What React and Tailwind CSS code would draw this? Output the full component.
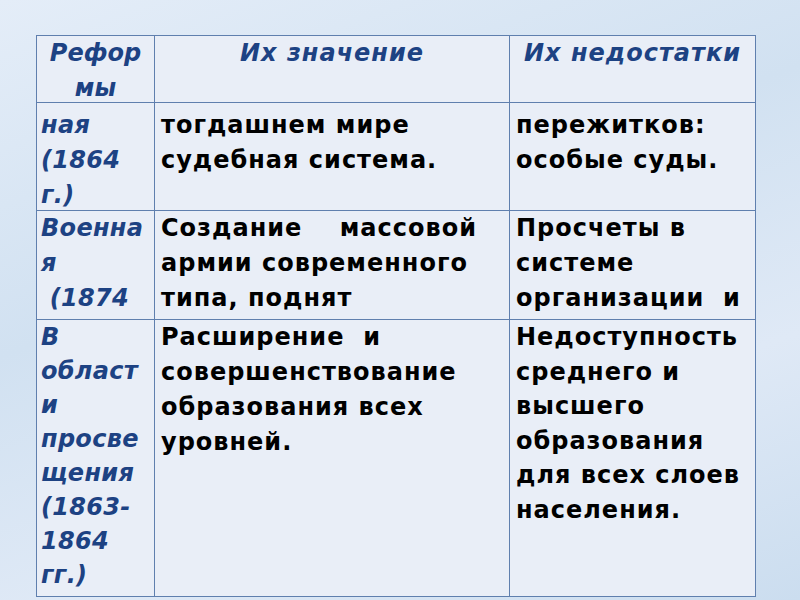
import React from "react";

const head = "text-[#1d4283] italic font-bold text-center align-top leading-[35px]";
const cell = "border border-[#5f7fae] align-top overflow-hidden";
const body = "text-black font-bold px-[6px]";
const side = "text-[#1d4283] italic font-bold px-[4px] tracking-[0.3px]";

export default function App() {
  return (
    <div
      className="w-[800px] h-[600px] overflow-hidden bg-[linear-gradient(160deg,#e4edf8_0%,#d1e1f1_40%,#dfe9f6_70%,#cbddef_100%)] pt-[35px] pl-[36px]"
      style={{ fontFamily: '"DejaVu Sans", Verdana, sans-serif' }}
    >
      <table className="table-fixed border-collapse bg-[#e9eef7] text-[24px] tracking-[1px]">
        <colgroup>
          <col className="w-[118px]" />
          <col className="w-[355px]" />
          <col className="w-[246px]" />
        </colgroup>
        <tbody>
          <tr>
            <td className={`${cell} ${head}`}>
              <div className="h-[66px] overflow-hidden tracking-[0px]">Рефор<br />мы</div>
            </td>
            <td className={`${cell} ${head}`}>
              <div className="h-[66px] overflow-hidden">Их значение</div>
            </td>
            <td className={`${cell} ${head}`}>
              <div className="h-[66px] overflow-hidden">Их недостатки</div>
            </td>
          </tr>
          <tr>
            <td className={cell}>
              <div className={`h-[107px] leading-[35px] pt-[5px] ${side}`}>ная<br />(1864<br />г.)</div>
            </td>
            <td className={cell}>
              <div className={`h-[107px] leading-[35px] pt-[5px] ${body}`}>тогдашнем мире<br />судебная система.</div>
            </td>
            <td className={cell}>
              <div className={`h-[107px] leading-[35px] pt-[5px] ${body}`}>пережитков:<br />особые суды.</div>
            </td>
          </tr>
          <tr>
            <td className={cell}>
              <div className={`h-[108px] leading-[35px] ${side} overflow-hidden`}>Военна<br />я<br />&nbsp;(1874</div>
            </td>
            <td className={cell}>
              <div className={`h-[108px] leading-[35px] ${body} overflow-hidden`}>
                Создание&nbsp;&nbsp;&nbsp;&nbsp;массовой<br />армии современного<br />типа, поднят
              </div>
            </td>
            <td className={cell}>
              <div className={`h-[108px] leading-[35px] ${body} overflow-hidden`}>Просчеты в<br />системе<br />организации&nbsp;&nbsp;и</div>
            </td>
          </tr>
          <tr>
            <td className={cell}>
              <div className={`h-[276px] leading-[34px] ${side} overflow-hidden`}>
                В<br />област<br />и<br />просве<br />щения<br />(1863-<br />1864<br />гг.)
              </div>
            </td>
            <td className={cell}>
              <div className={`h-[276px] leading-[35px] ${body}`}>
                Расширение&nbsp;&nbsp;и<br />совершенствование<br />образования всех<br />уровней.
              </div>
            </td>
            <td className={cell}>
              <div className={`h-[276px] leading-[34.5px] ${body}`}>
                Недоступность<br />среднего и<br />высшего<br />образования<br />для всех слоев<br />населения.
              </div>
            </td>
          </tr>
        </tbody>
      </table>
    </div>
  );
}
